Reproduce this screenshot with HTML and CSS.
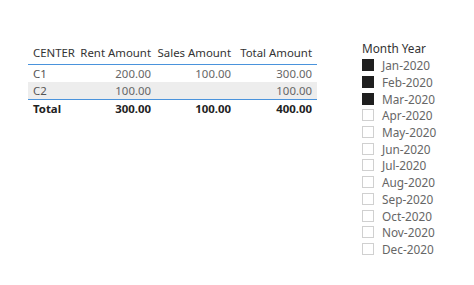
FILE: index.html
```html
<!DOCTYPE html>
<html lang="en">
<head>
  <meta charset="UTF-8">
  <title>Rent and Sales by Center</title>
  <link rel="stylesheet" href="styles.css">
</head>
<body>
  <div class="report">
    <table class="matrix">
      <colgroup>
        <col class="col-label">
        <col class="col-rent">
        <col class="col-sales">
        <col class="col-total">
      </colgroup>
      <thead>
        <tr>
          <th class="label">CENTER</th>
          <th>Rent Amount</th>
          <th>Sales Amount</th>
          <th>Total Amount</th>
        </tr>
      </thead>
      <tbody>
        <tr>
          <td class="label">C1</td>
          <td>200.00</td>
          <td>100.00</td>
          <td>300.00</td>
        </tr>
        <tr class="alt">
          <td class="label">C2</td>
          <td>100.00</td>
          <td></td>
          <td>100.00</td>
        </tr>
      </tbody>
      <tfoot>
        <tr>
          <td class="label">Total</td>
          <td>300.00</td>
          <td>100.00</td>
          <td>400.00</td>
        </tr>
      </tfoot>
    </table>

    <div class="slicer">
      <div class="slicer-title">Month Year</div>
      <ul class="slicer-list">
        <li><span class="box checked"></span>Jan-2020</li>
        <li><span class="box checked"></span>Feb-2020</li>
        <li><span class="box checked"></span>Mar-2020</li>
        <li><span class="box"></span>Apr-2020</li>
        <li><span class="box"></span>May-2020</li>
        <li><span class="box"></span>Jun-2020</li>
        <li><span class="box"></span>Jul-2020</li>
        <li><span class="box"></span>Aug-2020</li>
        <li><span class="box"></span>Sep-2020</li>
        <li><span class="box"></span>Oct-2020</li>
        <li><span class="box"></span>Nov-2020</li>
        <li><span class="box"></span>Dec-2020</li>
      </ul>
    </div>
  </div>
</body>
</html>
```

FILE: styles.css
```css
body {
  margin: 0;
  background-color: #fff;
  font-family: 'Noto Sans', 'Open Sans', sans-serif;
  font-size: 12px;
  color: #333;
}

.report {
  display: flex;
  align-items: flex-start;
  padding: 42px 0 0 28px;
}

/* matrix visual */
.matrix {
  border-collapse: collapse;
  table-layout: fixed;
  width: 289px;
  font-size: 11.4px;
}

.col-label { width: 50px; }
.col-rent { width: 78px; }
.col-sales { width: 80px; }
.col-total { width: 81px; }

.matrix th,
.matrix td {
  text-align: right;
  padding: 0 5px 0 0;
  line-height: 17px;
  white-space: nowrap;
}

.matrix th {
  font-weight: normal;
  color: #333;
  line-height: 16px;
  padding-top: 3px;
  padding-bottom: 3px;
  border-bottom: 1px solid #4a93dc;
}

.matrix th.label,
.matrix td.label {
  text-align: left;
  padding-left: 5px;
}

.matrix tbody td {
  color: #666;
}

.matrix tbody td.label {
  color: #555;
}

.matrix tr.alt td {
  background-color: #ededed;
}

.matrix tbody tr:last-child td {
  border-bottom: 1px solid #4a93dc;
}

.matrix tfoot td {
  font-weight: bold;
  color: #222;
}

/* month slicer */
.slicer {
  margin-left: 45px;
  margin-top: -2px;
  font-size: 11.8px;
}

.slicer-title {
  line-height: 16px;
  color: #333;
  margin-bottom: 1px;
}

.slicer-list {
  list-style: none;
  margin: 0;
  padding: 0;
}

.slicer-list li {
  display: flex;
  align-items: center;
  height: 16.7px;
  color: #666;
}

.box {
  width: 10px;
  height: 10px;
  border: 1px solid #d0d0d0;
  margin-right: 8px;
}

.box.checked {
  background-color: #1f1f1f;
  border-color: #1f1f1f;
}
```
